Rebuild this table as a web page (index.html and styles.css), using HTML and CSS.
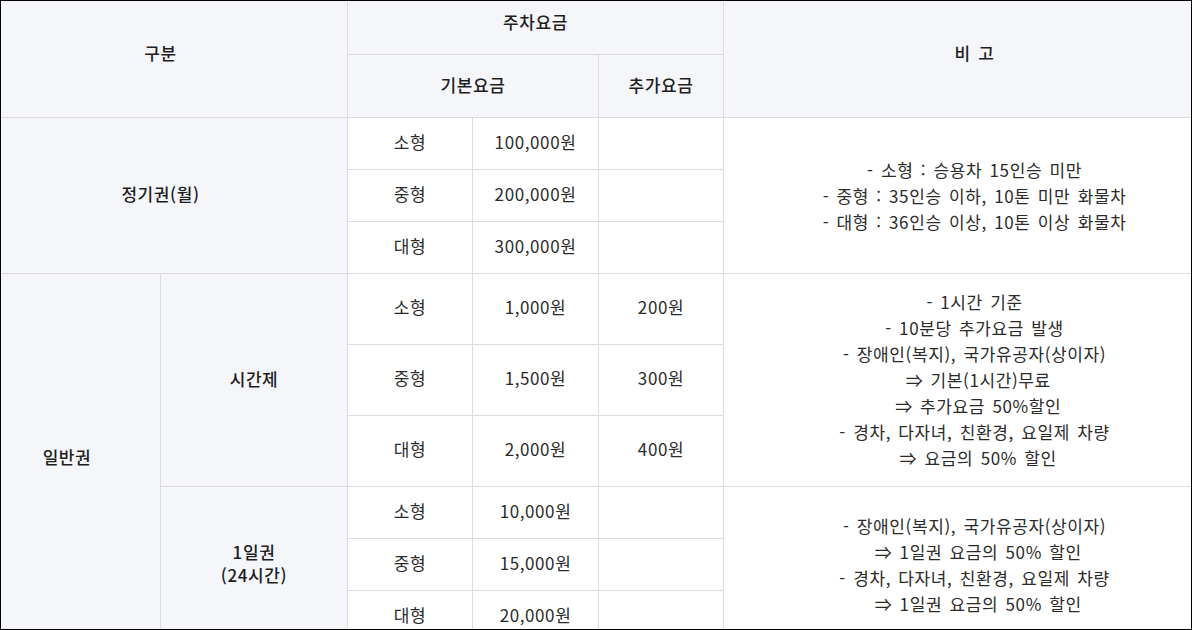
FILE: index.html
```html
<!DOCTYPE html>
<html lang="ko">
<head>
<meta charset="utf-8">
<title>주차요금</title>
<link rel="stylesheet" href="styles.css">
</head>
<body>
<div class="frame">
  <table class="fee">
    <colgroup>
      <col class="c-type">
      <col class="c-sub">
      <col class="c-size">
      <col class="c-base">
      <col class="c-extra">
      <col class="c-note">
    </colgroup>
    <thead>
      <tr class="h-row">
        <th rowspan="2" colspan="2">구분</th>
        <th colspan="3">주차요금</th>
        <th rowspan="2">비 고</th>
      </tr>
      <tr class="h-row">
        <th colspan="2">기본요금</th>
        <th>추가요금</th>
      </tr>
    </thead>
    <tbody>
      <tr class="r-short">
        <th rowspan="3" colspan="2" class="label">정기권(월)</th>
        <td>소형</td>
        <td>100,000원</td>
        <td></td>
        <td rowspan="3" class="note">- 소형 : 승용차 15인승 미만<br>- 중형 : 35인승 이하, 10톤 미만 화물차<br>- 대형 : 36인승 이상, 10톤 이상 화물차</td>
      </tr>
      <tr class="r-short">
        <td>중형</td>
        <td>200,000원</td>
        <td></td>
      </tr>
      <tr class="r-short">
        <td>대형</td>
        <td>300,000원</td>
        <td></td>
      </tr>
      <tr class="r-tall">
        <th rowspan="6" class="label">일반권</th>
        <th rowspan="3" class="label">시간제</th>
        <td>소형</td>
        <td>1,000원</td>
        <td>200원</td>
        <td rowspan="3" class="note">- 1시간 기준<br>- 10분당 추가요금 발생<br>- 장애인(복지), 국가유공자(상이자)<br>&nbsp;⇒ 기본(1시간)무료<br>&nbsp;⇒ 추가요금 50%할인<br>- 경차, 다자녀, 친환경, 요일제 차량<br>&nbsp;⇒ 요금의 50% 할인</td>
      </tr>
      <tr class="r-tall">
        <td>중형</td>
        <td>1,500원</td>
        <td>300원</td>
      </tr>
      <tr class="r-tall">
        <td>대형</td>
        <td>2,000원</td>
        <td>400원</td>
      </tr>
      <tr class="r-short">
        <th rowspan="3" class="label">1일권<br>(24시간)</th>
        <td>소형</td>
        <td>10,000원</td>
        <td></td>
        <td rowspan="3" class="note">- 장애인(복지), 국가유공자(상이자)<br>&nbsp;⇒ 1일권 요금의 50% 할인<br>- 경차, 다자녀, 친환경, 요일제 차량<br>&nbsp;⇒ 1일권 요금의 50% 할인</td>
      </tr>
      <tr class="r-short">
        <td>중형</td>
        <td>15,000원</td>
        <td></td>
      </tr>
      <tr class="r-short">
        <td>대형</td>
        <td>20,000원</td>
        <td></td>
      </tr>
    </tbody>
  </table>
</div>
</body>
</html>
```
FILE: styles.css
```css
html, body {
  margin: 0;
  padding: 0;
  background: #fff;
}

.frame {
  width: 1192px;
  height: 630px;
  box-sizing: border-box;
  border: 1px solid #000;
  overflow: hidden;
  background: #fff;
}

.fee {
  margin: -10px 0 0 -28px;
  width: 1252px;
  table-layout: fixed;
  border-collapse: collapse;
  font-family: "Noto Sans CJK KR", "Noto Sans", sans-serif;
  font-size: 17px;
  letter-spacing: 0.6px;
  word-spacing: 2px;
  color: #2b2b2b;
}

.c-type { width: 187px; }
.c-sub { width: 187px; }
.c-size { width: 125px; }
.c-base { width: 126px; }
.c-extra { width: 125px; }
.c-note { width: 502px; }

.fee th,
.fee td {
  border: 1px solid #dcdcdc;
  padding: 0 0 4px;
  text-align: center;
  vertical-align: middle;
}

.fee th {
  background: #f5f6fa;
  color: #1e1e1e;
  font-weight: 500;
  line-height: 23px;
}

.fee td {
  font-weight: 400;
  line-height: 26px;
}

.h-row { height: 63px; }
.r-short { height: 52px; }
.r-tall { height: 71px; }

.fee .note {
  padding: 0;
  line-height: 26px;
}
```
